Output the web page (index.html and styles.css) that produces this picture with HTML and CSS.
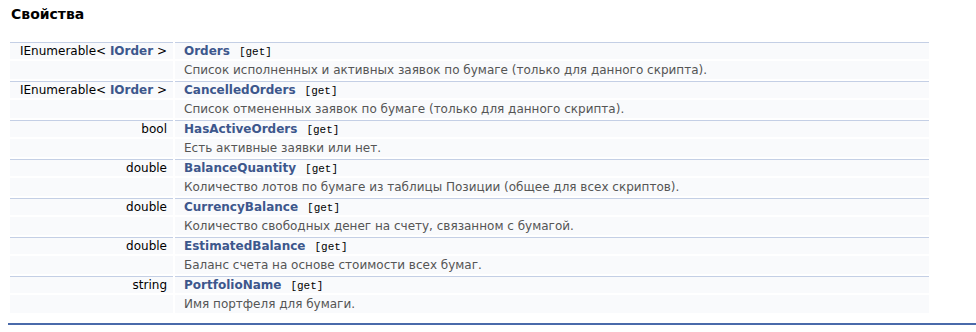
FILE: index.html
```html
<!DOCTYPE html>
<html lang="ru">
<head>
<meta charset="utf-8">
<link rel="stylesheet" href="styles.css">
</head>
<body>
<h2 class="groupheader">Свойства</h2>
<table class="memberdecls">
  <tr class="memitem">
    <td class="memItemLeft">IEnumerable&lt; <a class="el">IOrder</a> &gt;</td>
    <td class="memItemRight"><a class="el">Orders</a><span class="mlabel">[get]</span></td>
  </tr>
  <tr class="memdesc">
    <td class="mdescLeft"></td>
    <td class="mdescRight">Список исполненных и активных заявок по бумаге (только для данного скрипта).</td>
  </tr>
  <tr class="memitem">
    <td class="memItemLeft">IEnumerable&lt; <a class="el">IOrder</a> &gt;</td>
    <td class="memItemRight"><a class="el">CancelledOrders</a><span class="mlabel">[get]</span></td>
  </tr>
  <tr class="memdesc">
    <td class="mdescLeft"></td>
    <td class="mdescRight">Список отмененных заявок по бумаге (только для данного скрипта).</td>
  </tr>
  <tr class="memitem">
    <td class="memItemLeft">bool</td>
    <td class="memItemRight"><a class="el">HasActiveOrders</a><span class="mlabel">[get]</span></td>
  </tr>
  <tr class="memdesc">
    <td class="mdescLeft"></td>
    <td class="mdescRight">Есть активные заявки или нет.</td>
  </tr>
  <tr class="memitem">
    <td class="memItemLeft">double</td>
    <td class="memItemRight"><a class="el">BalanceQuantity</a><span class="mlabel">[get]</span></td>
  </tr>
  <tr class="memdesc">
    <td class="mdescLeft"></td>
    <td class="mdescRight">Количество лотов по бумаге из таблицы Позиции (общее для всех скриптов).</td>
  </tr>
  <tr class="memitem">
    <td class="memItemLeft">double</td>
    <td class="memItemRight"><a class="el">CurrencyBalance</a><span class="mlabel">[get]</span></td>
  </tr>
  <tr class="memdesc">
    <td class="mdescLeft"></td>
    <td class="mdescRight">Количество свободных денег на счету, связанном с бумагой.</td>
  </tr>
  <tr class="memitem">
    <td class="memItemLeft">double</td>
    <td class="memItemRight"><a class="el">EstimatedBalance</a><span class="mlabel">[get]</span></td>
  </tr>
  <tr class="memdesc">
    <td class="mdescLeft"></td>
    <td class="mdescRight">Баланс счета на основе стоимости всех бумаг.</td>
  </tr>
  <tr class="memitem">
    <td class="memItemLeft">string</td>
    <td class="memItemRight"><a class="el">PortfolioName</a><span class="mlabel">[get]</span></td>
  </tr>
  <tr class="memdesc">
    <td class="mdescLeft"></td>
    <td class="mdescRight">Имя портфеля для бумаги.</td>
  </tr>
</table>
<div class="footer-line"></div>
</body>
</html>
```
FILE: styles.css
```css
html, body {
  margin: 0;
  padding: 0;
  background: #fff;
}
body {
  margin: 6px 0 0 8px;
  font-family: "DejaVu Sans", sans-serif;
  font-size: 12px;
  color: #000;
}
.groupheader {
  margin: 0 0 0 3px;
  font-size: 14px;
  font-weight: bold;
  line-height: 16px;
  height: 16px;
}
.memberdecls {
  margin-top: 18px;
  border-collapse: separate;
  border-spacing: 2px;
  width: 923px;
  table-layout: fixed;
}
.memItemLeft, .memItemRight, .mdescLeft, .mdescRight {
  background: #F9FAFC;
  padding: 0;
  vertical-align: top;
}
.memItemLeft, .memItemRight {
  border-top: 1px solid #C4CFE5;
  height: 16px;
  line-height: 16px;
}
.memItemLeft {
  width: 157px;
  text-align: right;
  padding-right: 6px;
  white-space: nowrap;
}
.memItemRight, .mdescRight {
  padding-left: 9px;
}
.mdescLeft, .mdescRight {
  height: 18px;
  line-height: 18px;
}
.mdescRight {
  color: #555;
}
.el {
  color: #3D578C;
  font-weight: bold;
  text-decoration: none;
}
.mlabel {
  font-family: "Liberation Mono", monospace;
  font-size: 11px;
  line-height: 10px;
  margin-left: 9px;
}
.footer-line {
  margin-top: 8px;
  height: 2px;
  background: #4A6AAA;
}
```
